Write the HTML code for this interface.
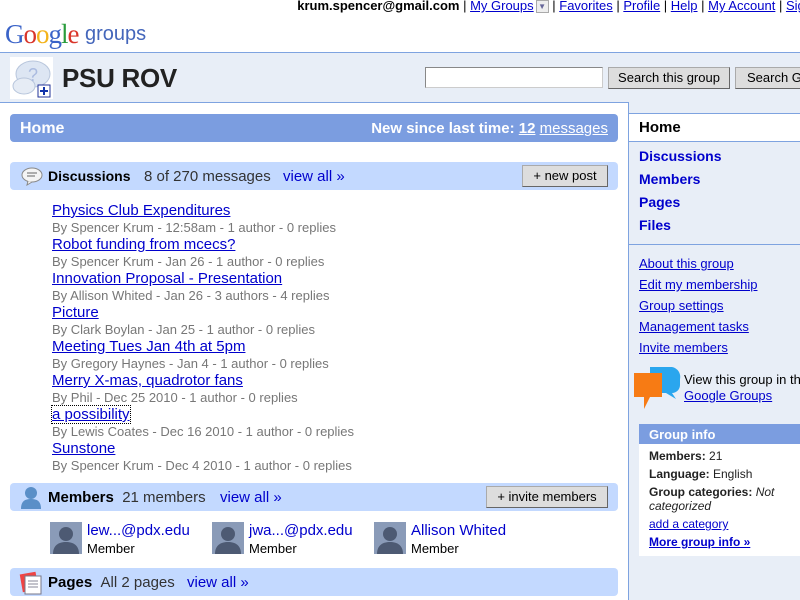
<!DOCTYPE html>
<html><head><meta charset="utf-8"><style>
*{margin:0;padding:0;box-sizing:border-box}
body{width:800px;height:600px;overflow:hidden;font-family:"Liberation Sans",Arial,sans-serif;background:#fff;position:relative;color:#000}
.a{position:absolute;white-space:nowrap}
a{color:#00c;text-decoration:underline}
.bar{position:absolute;left:10px;width:608px;height:28px;background:#c3d9ff;border-radius:4px}
.btn{position:absolute;background:#ddd;border:1px solid #aaa;border-right-color:#666;border-bottom-color:#666;font-size:13px;text-align:center;line-height:19px;white-space:nowrap;overflow:hidden}
.t{font-size:15px}
.m{font-size:13px;color:#777}
.rl{font-size:14px;font-weight:bold;color:#00c;text-decoration:none}
.sl{font-size:13px}
</style></head><body>
<div class="a" style="top:-2px;right:-12px;font-size:13px;color:#000"><b>krum.spencer@gmail.com</b> | <a>My Groups</a><span style="display:inline-block;width:13px;height:13px;border:1px solid #aaa;background:#eee;font-size:8px;color:#669;text-align:center;line-height:11px;vertical-align:middle;margin-left:2px">▼</span> | <a>Favorites</a> | <a>Profile</a> | <a>Help</a> | <a>My Account</a> | <a>Sign</a></div>
<div class="a" style="top:19px;left:5px;font-family:'Liberation Serif',serif;font-size:27px;letter-spacing:-1px"><span style="color:#3a63c8">G</span><span style="color:#d9352a">o</span><span style="color:#f3b31b">o</span><span style="color:#3a63c8">g</span><span style="color:#2a9c3c">l</span><span style="color:#d9352a">e</span></div>
<div class="a" style="top:23px;left:85px;font-size:20px;color:#4466bb">groups</div>
<div class="a" style="top:52px;left:0;width:800px;height:51px;background:#e8eef7;border-top:1px solid #7ea3e0"></div>
<div class="a" style="top:102px;left:0;width:629px;height:1px;background:#7ea3e0"></div>
<div class="a" style="top:102px;left:628px;width:172px;height:498px;background:#e8eef7;border-left:1px solid #7ea3e0"></div>
<div class="a" style="top:113px;left:629px;width:171px;height:1px;background:#7ea3e0"></div>
<div class="a" style="top:114px;left:629px;width:171px;height:28px;background:#fff;border-bottom:1px solid #7ea3e0"></div>
<div class="a" style="top:57px;left:10px;width:43px;height:42px;background:#fff">
<svg width="43" height="42"><ellipse cx="23" cy="17" rx="17" ry="13" fill="#dde6f3" stroke="#b8c6dc"/><ellipse cx="14" cy="29" rx="11" ry="8" fill="#e6ecf5" stroke="#b8c6dc"/><text x="18" y="24" font-size="18" fill="#aabbe0" font-family="Liberation Sans">?</text><rect x="28" y="28" width="12" height="12" fill="#fff" stroke="#223399"/><path d="M34 30v8M30 34h8" stroke="#1133aa" stroke-width="2"/></svg></div>
<div class="a" style="top:63px;left:62px;font-size:26px;font-weight:bold;color:#222;letter-spacing:-0.3px">PSU ROV</div>
<div class="a" style="top:67px;left:425px;width:178px;height:21px;background:#fff;border:1px solid #888;border-bottom-color:#ccc;border-right-color:#ccc"></div>
<div class="btn" style="top:67px;left:608px;width:122px;height:22px;line-height:20px">Search this group</div>
<div class="btn" style="top:67px;left:735px;width:80px;height:22px;line-height:20px;text-align:left;padding-left:11px">Search Groups</div>
<div class="a" style="top:114px;left:10px;width:608px;height:28px;background:#7b9de0;border-radius:4px"></div>
<div class="a" style="top:120px;left:20px;font-size:16px;font-weight:bold;color:#fff">Home</div>
<div class="a" style="top:120px;right:192px;font-size:15px;font-weight:bold;color:#fff">New since last time: <u>12</u> <u style="font-weight:normal">messages</u></div>
<div class="a" style="top:119px;left:639px;font-size:15px;font-weight:bold">Home</div>
<div class="bar" style="top:162px"></div>
<svg class="a" style="top:166px;left:20px" width="24" height="20"><ellipse cx="12" cy="9" rx="10" ry="7" fill="#f4f4f4" stroke="#888"/><path d="M8 15l-1 4 5-3" fill="#f4f4f4" stroke="#888"/><path d="M7 7h10M7 10h8" stroke="#666"/></svg>
<div class="a" style="top:168px;left:48px;font-size:14px;font-weight:bold">Discussions</div>
<div class="a" style="top:168px;left:144px;font-size:15px;color:#333">8 of 270 messages</div>
<div class="a" style="top:168px;left:283px;font-size:15px;color:#00c">view all »</div>
<div class="btn" style="top:165px;left:522px;width:86px;height:22px">+ new post</div>
<div class="a t" style="top:202px;left:52px;line-height:17px">
<a>Physics Club Expenditures</a><br><span class="m">By Spencer Krum - 12:58am - 1 author - 0 replies</span><br>
<a>Robot funding from mcecs?</a><br><span class="m">By Spencer Krum - Jan 26 - 1 author - 0 replies</span><br>
<a>Innovation Proposal - Presentation</a><br><span class="m">By Allison Whited - Jan 26 - 3 authors - 4 replies</span><br>
<a>Picture</a><br><span class="m">By Clark Boylan - Jan 25 - 1 author - 0 replies</span><br>
<a>Meeting Tues Jan 4th at 5pm</a><br><span class="m">By Gregory Haynes - Jan 4 - 1 author - 0 replies</span><br>
<a>Merry X-mas, quadrotor fans</a><br><span class="m">By Phil - Dec 25 2010 - 1 author - 0 replies</span><br>
<a style="outline:1px dotted #000">a possibility</a><br><span class="m">By Lewis Coates - Dec 16 2010 - 1 author - 0 replies</span><br>
<a>Sunstone</a><br><span class="m">By Spencer Krum - Dec 4 2010 - 1 author - 0 replies</span></div>
<div class="bar" style="top:483px"></div>
<svg class="a" style="top:485px;left:19px" width="24" height="24"><circle cx="12" cy="8" r="6" fill="#5a8fc8"/><path d="M2 24c0-8 4-10 10-10s10 2 10 10z" fill="#5a8fc8"/></svg>
<div class="a" style="top:489px;left:48px;font-size:15px"><b>Members</b> &nbsp;<span style="color:#333">21 members</span></div>
<div class="a" style="top:489px;left:220px;font-size:15px;color:#00c">view all »</div>
<div class="btn" style="top:486px;left:486px;width:122px;height:22px">+ invite members</div>
<svg class="a" style="top:522px;left:50px" width="32" height="32"><rect width="32" height="32" fill="#8a9bb8"/><circle cx="16" cy="12" r="7" fill="#4d5a73"/><path d="M3 32c0-9 6-12 13-12s13 3 13 12z" fill="#4d5a73"/></svg>
<svg class="a" style="top:522px;left:212px" width="32" height="32"><rect width="32" height="32" fill="#8a9bb8"/><circle cx="16" cy="12" r="7" fill="#4d5a73"/><path d="M3 32c0-9 6-12 13-12s13 3 13 12z" fill="#4d5a73"/></svg>
<svg class="a" style="top:522px;left:374px" width="32" height="32"><rect width="32" height="32" fill="#8a9bb8"/><circle cx="16" cy="12" r="7" fill="#4d5a73"/><path d="M3 32c0-9 6-12 13-12s13 3 13 12z" fill="#4d5a73"/></svg>
<div class="a" style="top:522px;left:87px;font-size:15px;color:#00c">lew...@pdx.edu</div><div class="a" style="top:541px;left:87px;font-size:13px">Member</div>
<div class="a" style="top:522px;left:249px;font-size:15px;color:#00c">jwa...@pdx.edu</div><div class="a" style="top:541px;left:249px;font-size:13px">Member</div>
<div class="a" style="top:522px;left:411px;font-size:15px;color:#00c">Allison Whited</div><div class="a" style="top:541px;left:411px;font-size:13px">Member</div>
<div class="bar" style="top:568px"></div>
<svg class="a" style="top:571px;left:19px" width="26" height="24"><rect x="2" y="2" width="16" height="18" fill="#e44" transform="rotate(-10 10 10)"/><rect x="6" y="5" width="16" height="18" fill="#fff" stroke="#778"/><path d="M9 10h10M9 13h10M9 16h10" stroke="#889"/></svg>
<div class="a" style="top:574px;left:48px;font-size:15px"><b>Pages</b> &nbsp;<span style="color:#333">All 2 pages</span></div>
<div class="a" style="top:574px;left:187px;font-size:15px;color:#00c">view all »</div>
<div class="a rl" style="top:148px;left:639px">Discussions</div>
<div class="a rl" style="top:171px;left:639px">Members</div>
<div class="a rl" style="top:194px;left:639px">Pages</div>
<div class="a rl" style="top:217px;left:639px">Files</div>
<div class="a" style="top:244px;left:629px;width:171px;height:1px;background:#7ea3e0"></div>
<div class="a sl" style="top:256px;left:639px"><a>About this group</a></div>
<div class="a sl" style="top:277px;left:639px"><a>Edit my membership</a></div>
<div class="a sl" style="top:298px;left:639px"><a>Group settings</a></div>
<div class="a sl" style="top:319px;left:639px"><a>Management tasks</a></div>
<div class="a sl" style="top:340px;left:639px"><a>Invite members</a></div>
<svg class="a" style="top:365px;left:632px" width="50" height="46"><path d="M18 2h22a10 10 0 0 1 8 12v6a8 8 0 0 1-8 8l4 6-10-6H18z" fill="#2aa6ee"/><path d="M2 8h28v24H18l-6 12v-12H2z" fill="#f77b14"/></svg>
<div class="a sl" style="top:372px;left:684px;color:#000">View this group in the new</div>
<div class="a sl" style="top:388px;left:684px"><a>Google Groups</a></div>
<div class="a" style="top:424px;left:639px;width:161px;height:20px;background:#7b9de0;color:#fff;font-weight:bold;font-size:13px;padding:3px 0 0 10px">Group info</div>
<div class="a" style="top:444px;left:639px;width:161px;height:112px;background:#fff"></div>
<div class="a" style="top:447px;left:649px;font-size:12px;line-height:18px;color:#222;white-space:normal;width:150px"><b>Members:</b> 21<br><b>Language:</b> English<br><div style="line-height:14px;margin:2px 0"><b>Group categories:</b> <i>Not categorized</i></div><a style="line-height:18px">add a category</a><br><a><b>More group info »</b></a></div>
</body></html>
